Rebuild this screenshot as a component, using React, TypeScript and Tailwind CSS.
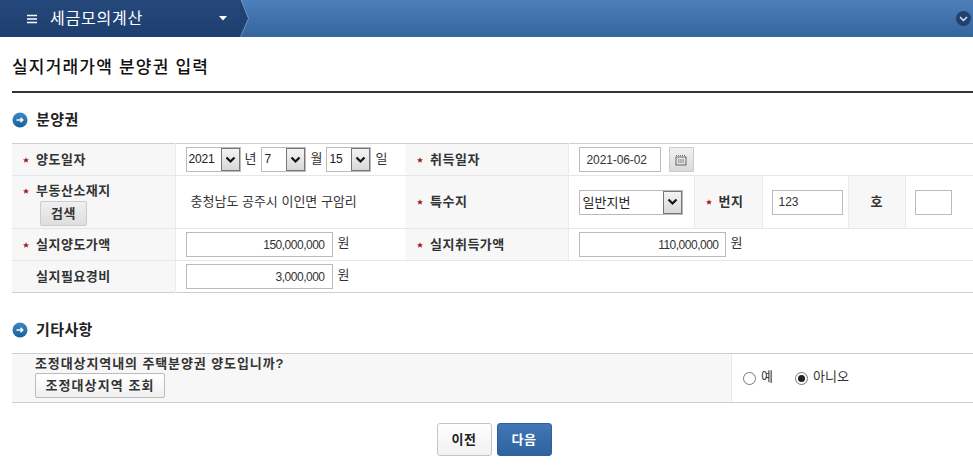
import React from 'react';

const kr = "font-['Liberation_Sans','Noto_Sans_CJK_KR',sans-serif]";

function Star() {
  return (
    <svg width="6" height="6" viewBox="0 0 6 6" className="mr-[7px] inline-block align-[1px]">
      <path d="M3 0.2 L3.8 2.2 L6 2.4 L4.3 3.7 L5 5.8 L3 4.6 L1 5.8 L1.7 3.7 L0 2.4 L2.2 2.2 Z" fill="#a01818" />
    </svg>
  );
}

function Label({ children, star = true, className = '' }: { children: React.ReactNode; star?: boolean; className?: string }) {
  return (
    <th className={`border-r border-[#ebebeb] bg-[#f7f7f7] text-left align-middle text-[13px] font-bold tracking-[0.5px] text-[#333] ${className}`}>
      {star && <Star />}
      {!star && <span className="inline-block w-[13px]" />}
      {children}
    </th>
  );
}

function FakeSelect({ value, width, textClass = 'pl-[2px] text-[12px] tracking-[-0.2px]' }: { value: string; width: string; textClass?: string }) {
  return (
    <span className={`inline-flex h-[25px] items-stretch border border-[#bbb] bg-white text-[#222] ${width}`}>
      <span className={`flex-1 leading-[23px] ${textClass}`}>{value}</span>
      <span className="flex w-[19px] items-center justify-center border border-[#777] bg-gradient-to-b from-[#f4f4f4] to-[#d8d8d8]">
        <svg width="11" height="8" viewBox="0 0 11 8">
          <path d="M1.5 1.5 L5.5 5.5 L9.5 1.5" fill="none" stroke="#111" strokeWidth="2.2" />
        </svg>
      </span>
    </span>
  );
}

function TextBox({ value, className = '' }: { value: string; className?: string }) {
  return (
    <input
      readOnly
      value={value}
      className={`h-[25px] border border-[#bbb] bg-white text-[12px] text-[#333] outline-none ${className}`}
    />
  );
}

function SectionTitle({ children }: { children: React.ReactNode }) {
  return (
    <div className="flex h-[20px] items-center pl-[12px]">
      <svg width="16" height="16" viewBox="0 0 16 16" className="mr-[8px]">
        <defs>
          <linearGradient id="ball" x1="0" y1="0" x2="0" y2="1">
            <stop offset="0" stopColor="#3d8ac4" />
            <stop offset="1" stopColor="#14609f" />
          </linearGradient>
        </defs>
        <circle cx="8" cy="8" r="7.5" fill="url(#ball)" />
        <path d="M4.5 8 H10.5 M8.5 5.8 L10.8 8 L8.5 10.2" fill="none" stroke="#fff" strokeWidth="1.4" />
      </svg>
      <span className="text-[15px] font-bold tracking-[0.4px] text-[#222]">{children}</span>
    </div>
  );
}

export default function App() {
  return (
    <div className={`h-[474px] w-[973px] overflow-hidden bg-white ${kr}`}>
      {/* top bar */}
      <div className="flex h-[37px] items-stretch justify-between bg-gradient-to-b from-[#4d7fba] to-[#35659f]">
        <div className="relative flex w-[240px] items-center bg-gradient-to-b from-[#25487a] to-[#1d3f70] pl-[27px] text-white">
          <svg width="11" height="10" viewBox="0 0 11 10" className="mr-[12px]">
            <path d="M0 1.5 H10 M0 5 H10 M0 8.5 H10" stroke="#fff" strokeWidth="1.7" />
          </svg>
          <span className="text-[16px] leading-none tracking-[0.8px]">세금모의계산</span>
          <svg width="8" height="5" viewBox="0 0 8 5" className="ml-[76px]">
            <path d="M0 0 H8 L4 4.5 Z" fill="#fff" />
          </svg>
          <svg width="10" height="37" viewBox="0 0 10 37" className="absolute top-0 left-[240px]">
            <path d="M0 0 L1 0 L8.5 18.5 L0.5 37 L0 37 Z" fill="#1f4273" />
            <path d="M1 0 L8.5 18.5 L0.5 37" fill="none" stroke="#6c97c9" strokeWidth="1" />
          </svg>
        </div>
        <div className="flex items-center pr-[2px]">
          <span className="flex h-[15px] w-[15px] items-center justify-center rounded-full bg-[#22406e]">
            <svg width="9" height="6" viewBox="0 0 9 6">
              <path d="M1 1 L4.5 4.5 L8 1" fill="none" stroke="#dbe8f5" strokeWidth="1.5" />
            </svg>
          </span>
        </div>
      </div>

      {/* page title */}
      <div className="ml-[12px] flex h-[56px] items-center border-b-2 border-[#333] pt-[8px] text-[17px] font-medium tracking-[1.2px] text-[#111]">
        실지거래가액 분양권 입력
      </div>

      <div className="mt-[17px]">
        <SectionTitle>분양권</SectionTitle>
      </div>

      <table className="mt-[13px] ml-[12px] w-[961px] table-fixed border-collapse border-y border-[#cfcfcf]">
        <colgroup>
          <col className="w-[163px]" />
          <col className="w-[230px]" />
          <col className="w-[163px]" />
          <col className="w-[126px]" />
          <col className="w-[68px]" />
          <col className="w-[86px]" />
          <col className="w-[57px]" />
          <col className="w-[68px]" />
        </colgroup>
        <tbody>
          <tr className="h-[32px] border-b border-[#e6e6e6]">
            <Label className="pl-[11px]">양도일자</Label>
            <td className="pl-[10px] text-[13px] whitespace-nowrap text-[#333]">
              <span className="inline-flex items-center">
                <FakeSelect value="2021" width="w-[55px]" />
                <span className="mr-[5px] ml-[4px] -translate-y-[1px]">년</span>
                <FakeSelect value="7" width="w-[45px]" />
                <span className="mx-[4px] -translate-y-[1px]">월</span>
                <FakeSelect value="15" width="w-[45px]" />
                <span className="mx-[4px] -translate-y-[1px]">일</span>
              </span>
            </td>
            <Label className="pl-[12px]">취득일자</Label>
            <td colSpan={5} className="pl-[10px]">
              <span className="inline-flex items-center">
                <TextBox value="2021-06-02" className="w-[82px] pl-[7px] tracking-[-0.1px]" />
                <span className="ml-[8px] flex h-[25px] w-[25px] items-center justify-center border border-[#ccc] bg-gradient-to-b from-[#f1f1f1] to-[#d9d9d9]">
                  <svg width="12" height="12" viewBox="0 0 12 12">
                    <path d="M1 1.5 H11" stroke="#777" strokeWidth="1" strokeDasharray="1 1" />
                    <rect x="1" y="3" width="10" height="8" fill="none" stroke="#666" />
                    <path d="M3 6 H9 M3 8 H9" stroke="#666" strokeWidth="1" strokeDasharray="1.5 0.7" />
                  </svg>
                </span>
              </span>
            </td>
          </tr>
          <tr className="h-[53px] border-b border-[#e6e6e6]">
            <th className="border-r border-[#ebebeb] bg-[#f7f7f7] pl-[11px] text-left align-top text-[13px] font-bold tracking-[0.5px] text-[#333]">
              <div className="mt-[8px] leading-[14px]"><Star />부동산소재지</div>
              <button className="mt-[3px] ml-[17px] block h-[25px] w-[47px] rounded-[2px] border border-[#ccc] bg-gradient-to-b from-[#f0f0f0] to-[#dedede] text-[13px] font-bold tracking-[0.5px] text-[#333]">
                검색
              </button>
            </th>
            <td className="pl-[15px] text-[13px] text-[#333]">충청남도 공주시 이인면 구암리</td>
            <Label className="pl-[12px]">특수지</Label>
            <td className="pl-[10px]">
              <FakeSelect value="일반지번" width="w-[104px]" textClass="pl-[3px] text-[13px]" />
            </td>
            <Label className="border-l pl-[11px]">번지</Label>
            <td className="pl-[9px]">
              <TextBox value="123" className="w-[71px] pl-[6px]" />
            </td>
            <th className="border-x border-[#ebebeb] bg-[#f7f7f7] text-center text-[13px] font-bold text-[#333]">호</th>
            <td className="pl-[9px]">
              <TextBox value="" className="w-[37px]" />
            </td>
          </tr>
          <tr className="h-[32px] border-b border-[#e6e6e6]">
            <Label className="pl-[11px]">실지양도가액</Label>
            <td className="pl-[10px] text-[13px] text-[#333]">
              <TextBox value="150,000,000" className="w-[147px] pr-[7px] text-right tracking-[-0.5px]" />
              <span className="ml-[5px] align-[2px]">원</span>
            </td>
            <Label className="pl-[12px]">실지취득가액</Label>
            <td colSpan={5} className="pl-[10px] text-[13px] text-[#333]">
              <TextBox value="110,000,000" className="w-[147px] pr-[6px] text-right tracking-[-0.5px]" />
              <span className="ml-[5px] align-[2px]">원</span>
            </td>
          </tr>
          <tr className="h-[32px]">
            <Label star={false} className="pl-[11px]">실지필요경비</Label>
            <td className="pl-[10px] text-[13px] text-[#333]">
              <TextBox value="3,000,000" className="w-[147px] pr-[7px] text-right tracking-[-0.5px]" />
              <span className="ml-[5px] align-[2px]">원</span>
            </td>
            <td colSpan={6} />
          </tr>
        </tbody>
      </table>

      <div className="mt-[27px]">
        <SectionTitle>기타사항</SectionTitle>
      </div>

      <div className="mt-[13px] ml-[12px] flex h-[50px] border-y border-[#cfcfcf]">
        <div className="w-[720px] border-r border-[#ebebeb] bg-[#f7f7f7] pt-[3px] pl-[23px] text-[13px] font-bold tracking-[0.9px] text-[#333]">
          <div className="leading-[14px]">조정대상지역내의 주택분양권 양도입니까?</div>
          <button className="mt-[2px] block h-[25px] w-[130px] rounded-[2px] border border-[#bbb] bg-gradient-to-b from-white to-[#f0f0f0] text-[13px] font-bold tracking-[1.1px] text-[#333]">
            조정대상지역 조회
          </button>
        </div>
        <div className="flex items-center pl-[11px] text-[13px] text-[#333]">
          <span className="h-[13px] w-[13px] rounded-full border border-[#777] bg-white" />
          <span className="ml-[5px] -translate-y-[1px]">예</span>
          <span className="ml-[22px] flex h-[13px] w-[13px] items-center justify-center rounded-full border border-[#777] bg-white">
            <span className="h-[7px] w-[7px] rounded-full bg-[#222]" />
          </span>
          <span className="ml-[5px] -translate-y-[1px]">아니오</span>
        </div>
      </div>

      <div className="mt-[20px] flex justify-center gap-[5px] pl-[15px] text-[13px] font-bold tracking-[0.5px]">
        <button className="h-[33px] w-[55px] rounded-[3px] border border-[#c4c4c4] bg-gradient-to-b from-white to-[#f1f1f1] text-[#222]">이전</button>
        <button className="h-[33px] w-[55px] rounded-[3px] border border-[#2f5f9c] bg-gradient-to-b from-[#4276b4] to-[#2f639f] text-white">다음</button>
      </div>
    </div>
  );
}
